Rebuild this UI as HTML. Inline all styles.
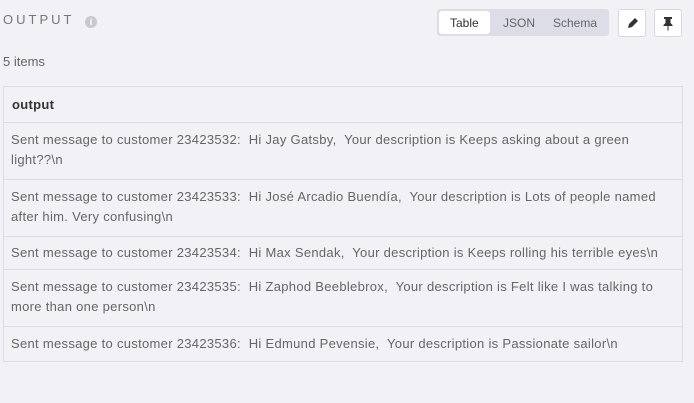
<!DOCTYPE html><html><head><style>
body{margin:0;width:694px;height:403px;background:#f1f1f6;font-family:"Liberation Sans",sans-serif;color:#555;overflow:hidden;position:relative}
.t{position:absolute;left:3px;top:12px;font-size:13px;letter-spacing:3px;color:#777}
.i{position:absolute;left:85px;top:16px;width:12px;height:12px;border-radius:50%;background:#c8c8ce;color:#fff;font-size:9px;text-align:center;line-height:12px;font-weight:bold}
.seg{position:absolute;left:437px;top:9px;width:172px;height:27px;background:#dcdde6;border-radius:3px;font-size:12px}
.seg span{position:absolute;top:7px;color:#666}
.tb{position:absolute;left:2px;top:2px;width:51px;height:23px;background:#fff;border-radius:3px;}
.b{position:absolute;top:9px;width:26px;height:26px;background:#fff;border:1px solid #d8d8e0;border-radius:3px}
.n{position:absolute;left:3px;top:54px;font-size:13px;color:#666}
table{position:absolute;left:3px;top:86px;width:680px;border-collapse:collapse;font-size:13px;letter-spacing:0.3px}
td{border:1px solid #dcdce6;padding:7px 7px 0;line-height:20px;color:#666;vertical-align:top;box-sizing:border-box}
th{border:1px solid #dcdce6;text-align:left;padding:0 8px;height:35px;font-size:13px;color:#333}
</style></head><body>
<div class="t">OUTPUT</div><div class="i">i</div>
<div class="seg"><div class="tb"></div><span style="left:13px;color:#333">Table</span><span style="left:66px">JSON</span><span style="left:116px">Schema</span></div>
<div class="b" style="left:618px"><svg width="26" height="26"><path d="M9 18l1-4 6-6 3 3-6 6z" fill="#333"/></svg></div>
<div class="b" style="left:654px"><svg width="26" height="26"><path d="M9 7h8v2h-1.5v4l2 2v1h-4v4l-0.5 1-0.5-1v-4h-4v-1l2-2v-4H9z" fill="#333"/></svg></div>
<div class="n">5 items</div>
<table>
<tr><th>output</th></tr>
<tr><td style="height:57px">Sent message to customer 23423532:&nbsp; Hi Jay Gatsby,&nbsp; Your description is Keeps asking about a green<br>light??\n</td></tr>
<tr><td style="height:57px">Sent message to customer 23423533:&nbsp; Hi José Arcadio Buendía,&nbsp; Your description is Lots of people named after him. Very confusing\n</td></tr>
<tr><td style="height:33px;padding-top:6px">Sent message to customer 23423534:&nbsp; Hi Max Sendak,&nbsp; Your description is Keeps rolling his terrible eyes\n</td></tr>
<tr><td style="height:57px">Sent message to customer 23423535:&nbsp; Hi Zaphod Beeblebrox,&nbsp; Your description is Felt like I was talking to more than one person\n</td></tr>
<tr><td style="height:35px">Sent message to customer 23423536:&nbsp; Hi Edmund Pevensie,&nbsp; Your description is Passionate sailor\n</td></tr>
</table>
</body></html>
